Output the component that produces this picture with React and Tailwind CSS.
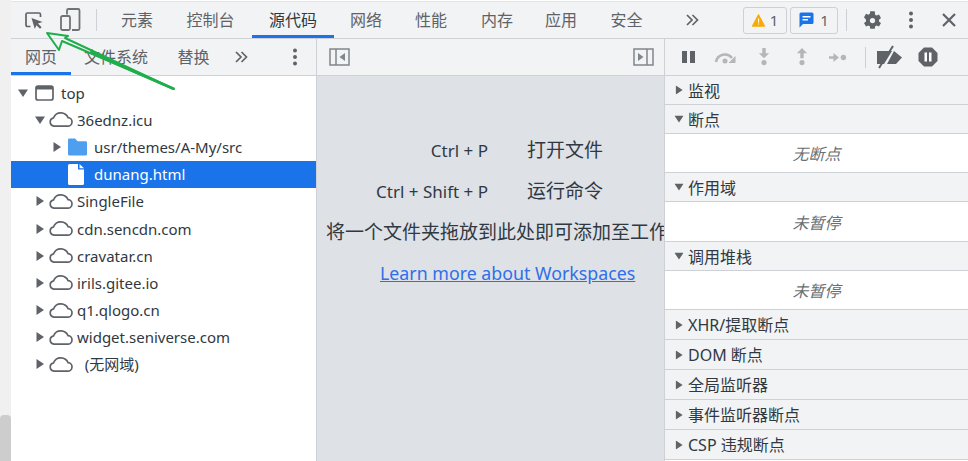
const font = { fontFamily: '"Noto Sans","Noto Sans CJK SC",sans-serif' };

function Caret({ open, className = "" }) {
  return (
    <svg width="10" height="10" viewBox="0 0 10 10" className={className}>
      {open ? <path d="M0 1.5h10L5 9z" fill="#5f6368" /> : <path d="M1.5 0v10L9 5z" fill="#5f6368" />}
    </svg>
  );
}
function Cloud() {
  return (
    <svg width="25" height="17" viewBox="0 0 25 16" fill="none" stroke="#5f6368" strokeWidth="1.7">
      <path d="M6 14.6h13.5a4.2 4.2 0 0 0 .6-8.4A7.8 7.8 0 0 0 13 1.3 7.6 7.6 0 0 0 5.6 6.3 4.2 4.2 0 0 0 6 14.6z" />
    </svg>
  );
}
function TreeRow({ pad, open, label, icon, selected, leaf }) {
  return (
    <div className={`h-[27.2px] flex items-center ${selected ? "bg-[#1a73e8] text-white" : "text-[#303942]"}`} style={{ paddingLeft: pad }}>
      <span className="w-[13px] flex items-center shrink-0">{leaf ? null : <Caret open={open} />}</span>
      {icon}
      <span className="ml-[4px] pt-[1px] text-[15px] leading-none whitespace-pre">{label}</span>
    </div>
  );
}
function Tab({ children, active, className = "" }) {
  return (
    <div className={`h-full flex items-center justify-center border-b-[3px] pt-[3px] ${active ? "border-[#1a73e8] text-[#303942]" : "border-transparent text-[#5f6368]"} ${className}`}>
      {children}
    </div>
  );
}
function Chevrons() {
  return (
    <svg width="13" height="12" viewBox="0 0 13 12" fill="none" stroke="#5f6368" strokeWidth="1.7">
      <path d="M1 1l5 5-5 5M6.5 1l5 5-5 5" />
    </svg>
  );
}
function Dots() {
  return (
    <svg width="4" height="18" viewBox="0 0 4 18" fill="#5f6368">
      <circle cx="2" cy="2.5" r="2" /><circle cx="2" cy="9" r="2" /><circle cx="2" cy="15.5" r="2" />
    </svg>
  );
}
function Section({ label, open, h = "h-[30px]" }) {
  return (
    <div className={`${h} flex items-center bg-[#f1f3f4] border-b border-[#cdd0d4] text-[16px] leading-none text-[#303942] shrink-0`}>
      <Caret open={open} className="ml-[9px] mr-[4px] scale-90" />
      <span className="pt-[1px]">{label}</span>
    </div>
  );
}
function Empty({ text, h = "h-[39px]" }) {
  return (
    <div className={`${h} bg-white border-b border-[#cdd0d4] flex items-center justify-center italic text-[16px] leading-none text-[#6b6f73] shrink-0 pt-[2px]`}>
      {text}
    </div>
  );
}

export default function App() {
  return (
    <div className="relative w-[968px] h-[461px] overflow-hidden bg-white flex" style={font}>
      <div className="relative w-[11px] h-full bg-[#f0f0f0] shrink-0">
        <div className="absolute left-0 right-0 bottom-0 h-[46px] bg-[#cdcdcd] rounded-t-[4px]" />
      </div>
      <div className="flex-1 min-w-0 flex flex-col">
        {/* main toolbar */}
        <div className="h-[38px] mt-[1px] border-t border-[#e3e4e6] border-b border-b-[#cdd0d4] bg-[#f1f3f4] flex items-center text-[16px] leading-none shrink-0">
          <div className="w-[46px] flex justify-center pt-[1px]">
            <svg width="20" height="20" viewBox="0 0 20 20" fill="none">
              <path d="M6.5 15.5H3.5a1.5 1.5 0 0 1-1.5-1.5V3.5A1.5 1.5 0 0 1 3.500 2H15a1.500 1.500 0 0 1 1.500 1.500V6" stroke="#5f6368" strokeWidth="1.700" />
              <path d="M7.500 7l11 4-4.500 1.600 3.600 3.600-1.600 1.600-3.600-3.600L10.800 18z" fill="#5f6368" />
            </svg>
          </div>
          <div className="w-[23px] ml-[2px] flex justify-center">
            <svg width="21" height="24" viewBox="0 0 21 24" fill="none" stroke="#6f7377" strokeWidth="1.800">
              <path d="M7 6.500V2.500A1.500 1.500 0 0 1 8.500 1h9.500a1.500 1.500 0 0 1 1.500 1.500v18a1.500 1.500 0 0 1-1.500 1.500h-6" />
              <rect x="1" y="8" width="9" height="14" rx="1.500" />
            </svg>
          </div>
          <div className="w-px h-[22px] bg-[#cdd0d4] ml-[14px] mr-[8px]" />
          <Tab className="w-[64px]">元素</Tab>
          <Tab className="w-[83px]">控制台</Tab>
          <Tab active className="w-[82px]">源代码</Tab>
          <Tab className="w-[64px]">网络</Tab>
          <Tab className="w-[66px]">性能</Tab>
          <Tab className="w-[66px]">内存</Tab>
          <Tab className="w-[62px]">应用</Tab>
          <Tab className="w-[69px]">安全</Tab>
          <div className="w-[13px] ml-[25px] flex"><Chevrons /></div>
          <div className="ml-[44px] w-[44px] h-[27px] rounded-[3px] border border-[#cdd0d4] flex items-center justify-center gap-[5px] text-[#5f6368]">
            <svg width="13" height="13" viewBox="0 0 13 13"><path d="M6.500.5l6.200 11.700H.3z" fill="#f9ab00" stroke="#f9ab00" strokeLinejoin="round" /><path d="M6 4.500h1.100v4H6zM6 9.400h1.100v1.200H6z" fill="#fff" /></svg>
            <span className="text-[15px]">1</span>
          </div>
          <div className="ml-[3px] w-[48px] h-[27px] rounded-[3px] border border-[#cdd0d4] flex items-center justify-center gap-[6px] text-[#5f6368]">
            <svg width="15" height="16" viewBox="0 0 15 16"><path d="M2 .5h11A1.500 1.500 0 0 1 14.500 2v8.500A1.500 1.500 0 0 1 13 12H4l-3.500 3.500V2A1.500 1.500 0 0 1 2 .5z" fill="#1a73e8" /><path d="M3.500 4h8v1.400h-8zM3.500 7h5.500v1.400H3.500z" fill="#fff" /></svg>
            <span className="text-[15px]">1</span>
          </div>
          <div className="w-px h-[22px] bg-[#cdd0d4] ml-[8px] mr-[15px]" />
          <svg width="21" height="21" viewBox="0 0 24 24" fill="#5f6368">
            <path fillRule="evenodd" d="M19.400 13a7.500 7.500 0 0 0 0-2l2.300-1.800-2.300-4-2.700 1.100a7.500 7.500 0 0 0-1.700-1L14.600 1.500H9.400L9 4.300a7.500 7.500 0 0 0-1.700 1L4.600 4.200l-2.300 4L4.600 11a7.500 7.500 0 0 0 0 2l-2.300 1.800 2.300 4 2.700-1.100a7.500 7.500 0 0 0 1.700 1l.4 2.800h5.200l.4-2.800a7.500 7.500 0 0 0 1.700-1l2.700 1.100 2.300-4zM12 15a3 3 0 1 1 0-6 3 3 0 0 1 0 6z" />
          </svg>
          <div className="ml-[26px] flex"><Dots /></div>
          <svg width="14" height="14" viewBox="0 0 14 14" stroke="#5f6368" strokeWidth="2.200" className="ml-[29px]"><path d="M1 1l12 12M13 1L1 13" /></svg>
        </div>

        <div className="flex-1 min-h-0 flex">
          {/* left pane */}
          <div className="w-[306px] shrink-0 flex flex-col border-r border-[#cdd0d4] bg-white">
            <div className="h-[37px] bg-[#f1f3f4] border-b border-[#cdd0d4] flex items-center text-[16px] leading-none shrink-0">
              <Tab active className="w-[60px]"><span className="text-[#5f6368]">网页</span></Tab>
              <Tab className="w-[92px] ml-[-1px]">文件系统</Tab>
              <Tab className="w-[65px] ml-[-1px]">替换</Tab>
              <div className="ml-[9px] flex"><Chevrons /></div>
              <div className="ml-[45px] flex"><Dots /></div>
            </div>
            <div className="pt-[3px]">
              <TreeRow pad={7} open label="top" icon={
                <svg width="19" height="16" viewBox="0 0 19 16" fill="none" className="ml-[4px] mr-[3px]"><rect x="1" y="1" width="17" height="14" rx="2" stroke="#5f6368" strokeWidth="1.700" /><rect x="1" y="1" width="17" height="3.500" fill="#5f6368" /></svg>
              } />
              <TreeRow pad={24} open label="36ednz.icu" icon={<Cloud />} />
              <TreeRow pad={41} label="usr/themes/A-My/src" icon={
                <svg width="19" height="18" viewBox="0 0 20 18" className="ml-[3px] mr-[3px]"><path d="M1.500 0h6l2.500 3h8.500A1.500 1.500 0 0 1 20 4.500V16.500a1.500 1.500 0 0 1-1.500 1.500h-17A1.500 1.500 0 0 1 0 16.500V1.500A1.500 1.500 0 0 1 1.500 0z" fill="#4e9ff0" /></svg>
              } />
              <TreeRow pad={41} selected leaf label="dunang.html" icon={
                <svg width="16" height="21" viewBox="0 0 16 21" className="ml-[3px] mr-[6px]"><path d="M1.500 0H10v5.500h6V19.500a1.500 1.500 0 0 1-1.500 1.500h-13A1.500 1.500 0 0 1 0 19.500V1.500A1.500 1.500 0 0 1 1.500 0z" fill="#fff" /><path d="M11.500 0L16 4.300h-4.500z" fill="#fff" /></svg>
              } />
              {["SingleFile", "cdn.sencdn.com", "cravatar.cn", "irils.gitee.io", "q1.qlogo.cn", "widget.seniverse.com", "  (无网域)"].map((l) => (
                <TreeRow key={l} pad={24} label={l} icon={<Cloud />} />
              ))}
            </div>
          </div>

          {/* center */}
          <div className="w-[348px] shrink-0 flex flex-col border-r border-[#cdd0d4] min-w-0">
            <div className="h-[37px] bg-[#f1f3f4] border-b border-[#cdd0d4] flex items-center justify-between pl-[12px] pr-[10px] shrink-0">
              <svg width="21" height="18" viewBox="0 0 21 18" fill="none"><rect x="1" y="1" width="19" height="16" stroke="#80868b" strokeWidth="1.500" /><path d="M7 1v16" stroke="#80868b" strokeWidth="1.500" /><path d="M16 5v8L10.500 9z" fill="#80868b" /></svg>
              <svg width="21" height="18" viewBox="0 0 21 18" fill="none"><rect x="1" y="1" width="19" height="16" stroke="#80868b" strokeWidth="1.500" /><path d="M14 1v16" stroke="#80868b" strokeWidth="1.500" /><path d="M5 5v8L10.500 9z" fill="#80868b" /></svg>
            </div>
            <div className="flex-1 bg-[#dee1e6] overflow-hidden text-[#303942] text-[19px] leading-none pt-[54px] flex flex-col">
              <div className="flex h-[41px] items-center"><span className="w-[171px] text-right text-[17px]">Ctrl + P</span><span className="ml-[39px]">打开文件</span></div>
              <div className="flex h-[41px] items-center"><span className="w-[171px] text-right text-[17px]">Ctrl + Shift + P</span><span className="ml-[39px]">运行命令</span></div>
              <div className="h-[41px] flex items-center ml-[9px] whitespace-nowrap">将一个文件夹拖放到此处即可添加至工作区</div>
              <div className="h-[41px] flex items-center ml-[63px] whitespace-nowrap text-[17.800px] text-[#2f6fe8] underline">Learn more about Workspaces</div>
            </div>
          </div>

          {/* right */}
          <div className="flex-1 min-w-0 flex flex-col overflow-hidden bg-white">
            <div className="h-[37px] bg-[#f1f3f4] border-b border-[#cdd0d4] flex items-center shrink-0 relative">
              <svg width="14" height="12" viewBox="0 0 14 12" className="ml-[17px]" fill="#5f6368"><path d="M0 0h5v12H0zM8 0h5v12H8z" /></svg>
              <svg width="24" height="14" viewBox="0 0 24 14" className="ml-[18px]" fill="none" stroke="#b4b7ba" strokeWidth="2.500"><path d="M2 12a9 9 0 0 1 16-4" /><path d="M21.500 6v7h-7z" fill="#b4b7ba" stroke="none" /><circle cx="11" cy="11" r="2.500" fill="#b4b7ba" stroke="none" /></svg>
              <svg width="12" height="18" viewBox="0 0 14 21" className="ml-[20px]" fill="#b4b7ba"><path d="M5 0h4v6h4l-6 6-6-6h4z" /><circle cx="7" cy="17" r="3" /></svg>
              <svg width="12" height="18" viewBox="0 0 14 21" className="ml-[26px]" fill="#b4b7ba"><path d="M7 0l6 6H9v6H5V6H1z" /><circle cx="7" cy="17" r="3" /></svg>
              <svg width="18" height="11" viewBox="0 0 20 12" className="ml-[21px]" fill="#b4b7ba"><path d="M0 4.500h5V1l6 5-6 5V7.500H0z" /><circle cx="16" cy="6" r="3" /></svg>
              <div className="w-px h-[21px] bg-[#cdd0d4] ml-[18px]" />
              <svg width="27" height="24" viewBox="0 0 27 24" className="ml-[10px]"><path d="M1 6h15l-8 13H1zM18 6l8 6.500-6 6.500H11z" fill="#5f6368" /><path d="M3 23L17 1" stroke="#5f6368" strokeWidth="2" /></svg>
              <svg width="20" height="20" viewBox="0 0 20 20" className="ml-[15px]"><path d="M6 .5h8L19.500 6v8L14 19.500H6L.5 14V6z" fill="#5f6368" /><path d="M6.500 5.500h2.500v9H6.500zM11 5.500h2.500v9H11z" fill="#fff" /></svg>
            </div>
            <Section label="监视" h="h-[29px]" />
            <Section label="断点" open h="h-[29px]" />
            <Empty text="无断点" />
            <Section label="作用域" open h="h-[29px]" />
            <Empty text="未暂停" h="h-[40px]" />
            <Section label="调用堆栈" open h="h-[29px]" />
            <Empty text="未暂停" />
            <Section label="XHR/提取断点" />
            <Section label="DOM 断点" />
            <Section label="全局监听器" />
            <Section label="事件监听器断点" />
            <Section label="CSP 违规断点" />
          </div>
        </div>
      </div>

      {/* green annotation arrow */}
      <svg className="absolute left-0 top-0 pointer-events-none" width="200" height="100" viewBox="0 0 200 100" fill="none">
        <path d="M174 89L62 41 59 50 47 33 68 36 65 38 174 89z" stroke="#1fae4b" strokeWidth="2" fill="#ffffff" fillOpacity="0.2" strokeLinejoin="round" />
        <path d="M174 89L90 52" stroke="#1fae4b" strokeWidth="3" />
      </svg>
    </div>
  );
}
